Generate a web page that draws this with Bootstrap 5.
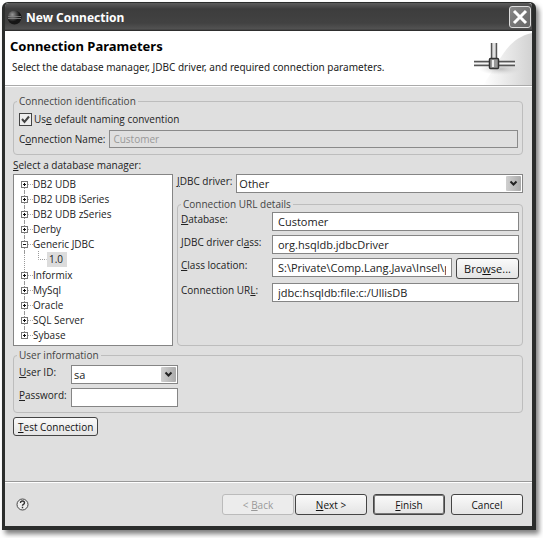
<!DOCTYPE html>
<html lang="en">
<head>
<meta charset="utf-8">
<meta name="viewport" content="width=device-width, initial-scale=1">
<title>New Connection</title>
<link href="https://cdn.jsdelivr.net/npm/bootstrap@5.3.0/dist/css/bootstrap.min.css" rel="stylesheet">
<style>
  body { font: 10px/14px "Open Sans", "Noto Sans", sans-serif; color: #222; background: #fff; }
  .page { min-height: 100vh; padding: 2px 7px 8px 2px; }
  .dialog-window { background: #dfdfdf; border: 3px solid #2b2d2c; border-top-width: 1px; border-bottom-width: 4px; border-right-width: 4px; border-radius: 6px 6px 0 0; box-shadow: 3px 4px 5px rgba(0,0,0,.5); }
  .title-strip { height: 28px; padding: 0 1px 0 2px; background: linear-gradient(#5c5c5c, #3d3d3d 6px, #424242 20px, #525252 26px, #222); color: #fff; border-radius: 4px 4px 0 0; }
  .title-strip h1, .banner h2 { font-family: "Noto Sans", sans-serif; font-weight: 700; }
  .title-strip h1 { font-size: 12px; line-height: 16px; margin: 1px 0 0 4px; }
  .close-btn { width: 22px; height: 22px; padding: 0; border: 1px solid #ddd; border-radius: 3px; background: linear-gradient(135deg, #888, #666); }
  .banner { height: 55px; background: #fff; border-bottom: 1px solid #aaa; box-shadow: 0 1px #fff; }
  .banner h2 { font-size: 13px; line-height: 18px; color: #000; margin: 6px 0 0 5px; }
  .banner p { font-family: "Noto Sans", sans-serif; margin: 5px 0 0 7px; }
  .banner svg { width: 62px; height: 54px; }
  .body-area { padding: 8px 9px 0 8px; }
  fieldset.group { border: 1px solid #bdbdbd; border-radius: 4px; }
  .group legend { float: none; width: auto; font-size: 10px; line-height: 14px; margin: 0 0 0 3px; padding: 0 2px; color: #444; }
  .dialog-window .form-control, .dialog-window .form-select { font-size: 11px; line-height: 14px; color: #222; min-height: 0; height: 19px; padding: 1px 5px; border: 1px solid #858585; border-radius: 0; background-color: #fff; }
  .dialog-window .form-select { padding: 1px 20px 1px 2px; background-size: 15px 15px; background-position: right 1px center; background-repeat: no-repeat; background-image: url("data:image/svg+xml,%3Csvg xmlns='http://www.w3.org/2000/svg' viewBox='0 0 15 15'%3E%3ClinearGradient id='g'%3E%3Cstop stop-color='%23d0d0d0'/%3E%3Cstop offset='1' stop-color='%23aaa'/%3E%3C/linearGradient%3E%3Crect width='15' height='15' rx='1' fill='url(%23g)'/%3E%3Cpath d='M4.5 5.5l3 3 3-3' fill='none' stroke='%23222' stroke-width='2'/%3E%3C/svg%3E"); }
  .dialog-window .form-control:disabled { background: #dfdfdf; color: #999; font-size: 10px; height: 18px; padding: 1px 3px; border-color: #8a8a8a; }
  .tick { appearance: none; width: 13px; height: 13px; margin: 0; border: 1px solid #444; background: #eee; }
  .tick:checked { background: #eee url("data:image/svg+xml,%3Csvg xmlns='http://www.w3.org/2000/svg' viewBox='0 0 11 11'%3E%3Cpath d='M2 5l2.5 3L9 2.5' fill='none' stroke='%23444' stroke-width='2'/%3E%3C/svg%3E"); }
  .ident { display: grid; row-gap: 4px; padding: 4px 4px 6px 5px; }
  .ident .tick-row { gap: 2px; }
  .manager-title { margin-top: 3px; }
  .manager-list { width: 160px; height: 172px; background: #fff; border: 1px solid #858585; padding: 2px 7px; margin: 2px 0 0; }
  .manager-list li { line-height: 15px; height: 15px; }
  .manager-list svg { width: 12px; height: 17px; flex: none; }
  .manager-list .picked { background: #dcdcdc; padding: 0 4px 0 2px; }
  .manager-list .child-line { width: 9px; margin-left: 5px; }
  .driver-side { padding-top: 19px; }
  .detail-grid { display: grid; grid-template-columns: 91px 1fr; row-gap: 4px; padding: 1px 3px 0 3px; }
  .user-grid { display: grid; grid-template-columns: 52px 107px; row-gap: 4px; padding: 3px 5px 5px; }
  .user-block { margin-top: 2px; }
  .push-btn { font-size: 10px; line-height: 14px; height: 21px; padding: 2px 4px; color: #111; border: 1px solid #444; border-radius: 3px; background: linear-gradient(#fafafa, #e4e4e4); --bs-btn-disabled-opacity: 1; }
  .push-btn:disabled { color: #999; border-color: #bbb; background: #ececec; }
  .push-btn.wide { width: 72px; }
  .push-btn.browse { width: 63px; flex: none; font-size: 11px; }
  .push-btn.short { height: 19px; padding: 1px 4px; }
  .push-btn.default { box-shadow: inset 0 0 0 1px #777; }
  .foot { border-top: 1px solid #999; box-shadow: inset 0 1px #fff; padding: 12px 9px 11px 11px; }
  .foot-actions { gap: 6px; }
  .foot-steps { gap: 1px; }
  .help-btn { width: 13px; height: 13px; }
  .help-btn svg { display: block; }
</style>
</head>
<body>
<div class="page d-flex">
<main class="dialog-window flex-grow-1 d-flex flex-column">
  <header class="title-strip d-flex align-items-center">
    <svg width="15" height="15" viewBox="0 0 15 15" aria-hidden="true"><defs><radialGradient id="ball" cx=".35" cy=".3"><stop stop-color="#999"/><stop offset="1" stop-color="#151515"/></radialGradient></defs><circle cx="7.5" cy="7.5" r="7" fill="url(#ball)"/><path d="M1 6.500h13M1 8.500h13" stroke="#888" stroke-width=".8"/></svg>
    <h1>New Connection</h1>
    <button type="button" class="close-btn ms-auto d-flex align-items-center justify-content-center" aria-label="Close"><svg width="18" height="18" viewBox="0 0 18 18"><path d="M3 3l12 12M15 3L3 15" stroke="#fff" stroke-width="3"/></svg></button>
  </header>
  <section class="banner d-flex justify-content-between">
    <div><h2>Connection Parameters</h2><p>Select the database manager, JDBC driver, and required connection parameters.</p></div>
    <svg viewBox="0 0 62 54" aria-hidden="true"><defs><linearGradient id="sweep"><stop stop-color="#fff"/><stop offset="1" stop-color="#d2d2d2"/></linearGradient><radialGradient id="shade"><stop stop-color="#bbb"/><stop offset="1" stop-color="#ddd" stop-opacity="0"/></radialGradient></defs>
      <path d="M62 2C36 8 32 28 13 54H62Z" fill="url(#sweep)"/><ellipse cx="31" cy="38" rx="22" ry="6" fill="url(#shade)"/>
      <path d="M4 30h41v5H4zM21 12h6v17h-6z" fill="#ccc"/><path d="M4 30.500h41M4 34.500h41M21.500 12v18M26.500 12v18" stroke="#555" stroke-width="1.400"/><path d="M24 12v18M4 32.500h41" stroke="#f4f4f4"/>
      <rect x="19.500" y="27.500" width="9" height="10" rx="1" fill="#999" stroke="#333" stroke-width="1.500"/><path d="M23 29v7" stroke="#eee" stroke-width="2"/></svg>
  </section>
  <form class="body-area">
    <fieldset class="group">
      <legend>Connection identification</legend>
      <div class="ident">
        <div class="tick-row d-flex align-items-center"><input class="tick" type="checkbox" id="naming" checked><label for="naming">Us<u>e</u> default naming convention</label></div>
        <div class="d-flex align-items-center gap-1"><label for="cname" class="text-nowrap">C<u>o</u>nnection Name:</label><input class="form-control flex-grow-1" id="cname" value="Customer" disabled></div>
      </div>
    </fieldset>
    <div class="d-flex gap-1">
      <div>
        <div class="manager-title" id="mgr"><u>S</u>elect a database manager:</div>
        <ul class="manager-list list-unstyled d-flex flex-column justify-content-between" aria-labelledby="mgr" id="managers"></ul>
      </div>
      <div class="driver-side flex-grow-1 d-flex flex-column">
        <div class="d-flex gap-1"><label for="driver" class="text-nowrap"><u>J</u>DBC driver:</label><select class="form-select" id="driver"><option>Other</option></select></div>
        <fieldset class="group flex-grow-1 mt-1">
          <legend>Connection URL details</legend>
          <div class="detail-grid">
            <label for="db"><u>D</u>atabase:</label><input class="form-control" id="db" value="Customer">
            <label for="cls">JDBC driver cl<u>a</u>ss:</label><input class="form-control" id="cls" value="org.hsqldb.jdbcDriver">
            <label for="loc"><u>C</u>lass location:</label><div class="d-flex gap-1"><input class="form-control" id="loc" value="S:\Private\Comp.Lang.Java\Insel\p"><button type="button" class="btn push-btn browse">Bro<u>w</u>se...</button></div>
            <label for="url">Connection UR<u>L</u>:</label><input class="form-control" id="url" value="jdbc:hsqldb:file:c:/UllisDB">
          </div>
        </fieldset>
      </div>
    </div>
    <fieldset class="group user-block">
      <legend>User information</legend>
      <div class="user-grid">
        <label for="uid"><u>U</u>ser ID:</label><select class="form-select" id="uid"><option>sa</option></select>
        <label for="pwd"><u>P</u>assword:</label><input class="form-control" type="password" id="pwd">
      </div>
    </fieldset>
    <button type="button" class="btn push-btn short mt-1 d-block"><u>T</u>est Connection</button>
  </form>
  <footer class="foot d-flex align-items-center mt-auto">
    <button type="button" class="btn help-btn p-0 border-0" aria-label="Help"><svg width="13" height="13" viewBox="0 0 13 13"><circle cx="6.500" cy="6.500" r="5.500" fill="#eee" stroke="#444"/><path d="M4.500 5q0-2 2-2t2 1.800q0 1-1 1.500-1 .5-1 1.400M6.500 8.800v1.500" fill="none" stroke="#333" stroke-width="1.400"/></svg></button>
    <div class="foot-actions d-flex ms-auto"><div class="foot-steps d-flex"><button type="button" class="btn push-btn wide" disabled>&lt; <u>B</u>ack</button><button type="button" class="btn push-btn wide"><u>N</u>ext &gt;</button></div><button type="submit" class="btn push-btn wide default"><u>F</u>inish</button><button type="button" class="btn push-btn wide">Cancel</button></div>
  </footer>
</main>
</div>
<script src="https://cdn.jsdelivr.net/npm/bootstrap@5.3.0/dist/js/bootstrap.bundle.min.js"></script>
<script>
  const managers = ["DB2 UDB", "DB2 UDB iSeries", "DB2 UDB zSeries", "Derby", "Generic JDBC", "1.0", "Informix", "MySql", "Oracle", "SQL Server", "Sybase"];
  const list = document.getElementById("managers");
  managers.forEach((name, i) => {
    const open = name === "Generic JDBC", child = name === "1.0";
    const top = i === 0 ? 8 : 0, bottom = i === managers.length - 1 ? 8 : 17;
    const box = child ? "" : `<path d="M7 8.5h5" stroke="#aaa" stroke-dasharray="1"/><rect x=".5" y="5.5" width="6" height="6" fill="#fff" stroke="#777"/><path d="M2 8.5h3${open ? "" : "M3.5 7v3"}" stroke="#111"/>`;
    const elbow = child ? '<svg class="child-line" viewBox="0 0 9 17"><path d="M.5 0v8.5h8" fill="none" stroke="#999" stroke-dasharray="1"/></svg>' : "";
    list.insertAdjacentHTML("beforeend", `<li class="d-flex align-items-center"><svg viewBox="0 0 12 17"><path d="M3.5 ${top}V${bottom}" stroke="#999" stroke-dasharray="1"/>${box}</svg>${elbow}<span class="${child ? "picked" : ""}">${name}</span></li>`);
  });
</script>
</body>
</html>
